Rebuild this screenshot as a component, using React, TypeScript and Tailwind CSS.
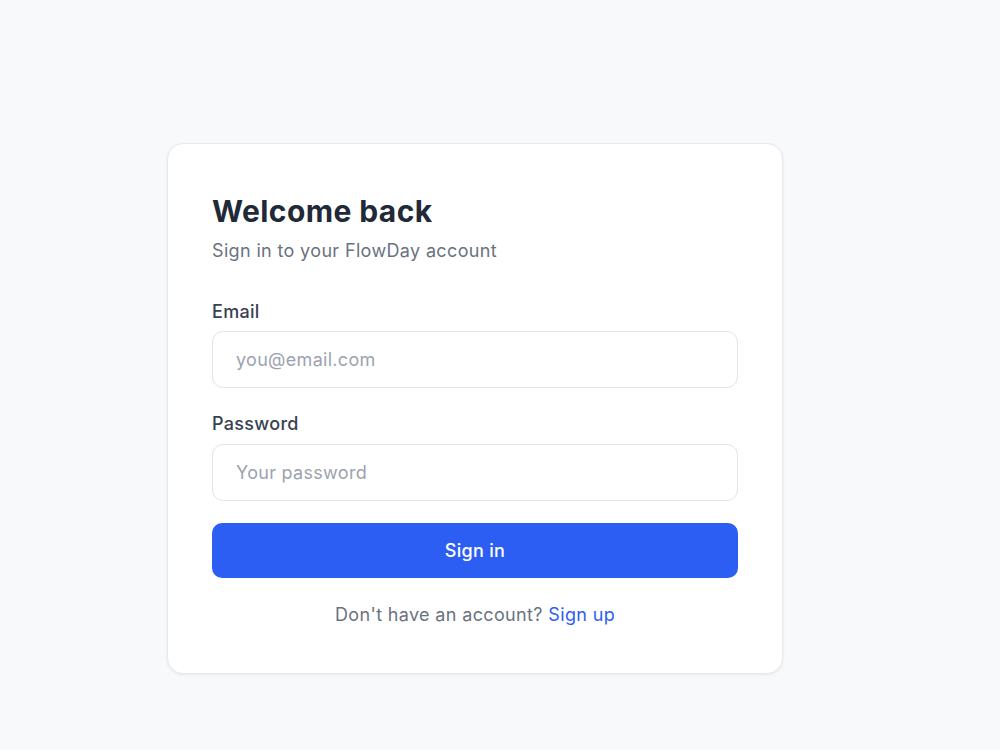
import React from "react";

export default function App() {
  return (
    <div
      className="min-h-[750px] w-full bg-[#f8f9fb] pt-[143px] pl-[167px]"
      style={{ fontFamily: "Inter, 'Noto Sans', sans-serif" }}
    >
      <div className="w-[616px] rounded-[16px] border border-[#e7e9ee] bg-white px-[44px] pt-[49px] pb-[44px] shadow-[0_1px_3px_rgba(15,23,42,0.08)]">
        <h1 className="text-[30px] leading-[36px] font-bold tracking-[0.4px] text-[#1f2937]">
          Welcome back
        </h1>
        <p className="mt-[8px] text-[18px] leading-[28px] tracking-[0.35px] text-[#6b7280]">
          Sign in to your FlowDay account
        </p>

        <div className="mt-[33px] flex flex-col">
          <label className="text-[18px] leading-[28px] font-medium tracking-[0.3px] text-[#374151]">
            Email
          </label>
          <input
            type="email"
            placeholder="you@email.com"
            className="mt-[5px] h-[57px] w-full rounded-[11px] border border-[#e2e4e9] bg-white px-[23px] text-[18px] tracking-[0.3px] text-[#1f2937] outline-none placeholder:text-[#9ca3af]"
          />
        </div>

        <div className="mt-[22px] flex flex-col">
          <label className="text-[18px] leading-[28px] font-medium tracking-[0.3px] text-[#374151]">
            Password
          </label>
          <input
            type="password"
            placeholder="Your password"
            className="mt-[6px] h-[57px] w-full rounded-[11px] border border-[#e2e4e9] bg-white px-[23px] text-[18px] tracking-[0.3px] text-[#1f2937] outline-none placeholder:text-[#9ca3af]"
          />
        </div>

        <button className="mt-[22px] flex h-[55px] w-full items-center justify-center rounded-[10px] bg-[#2d5ef3] text-[18px] font-medium tracking-[0.3px] text-white">
          Sign in
        </button>

        <p className="mt-[23px] text-center text-[18px] leading-[28px] tracking-[0.35px] text-[#6b7280]">
          Don't have an account?{" "}
          <a className="text-[#2d5ef3]" href="#">
            Sign up
          </a>
        </p>
      </div>
    </div>
  );
}
